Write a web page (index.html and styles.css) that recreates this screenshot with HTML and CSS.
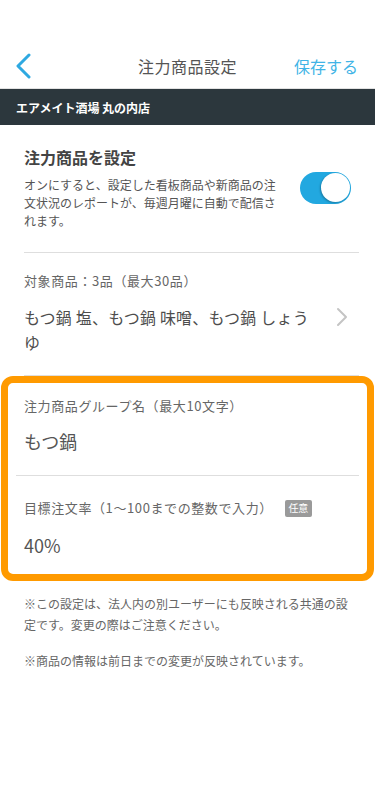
FILE: index.html
```html
<!DOCTYPE html>
<html lang="ja">
<head>
<meta charset="utf-8">
<link rel="stylesheet" href="styles.css">
</head>
<body>
<div class="status"></div>
<header class="nav">
  <span class="back">
    <svg width="18" height="26" viewBox="0 0 18 26"><path d="M15 2 L4 13 L15 24" fill="none" stroke="#2ea9e1" stroke-width="3" stroke-linecap="round" stroke-linejoin="round"/></svg>
  </span>
  <h1 class="title">注力商品設定</h1>
  <span class="save">保存する</span>
</header>
<div class="shop">エアメイト酒場 丸の内店</div>

<section class="block">
  <div class="block-inner toggle-row">
    <div class="toggle-text">
      <h2 class="heading">注力商品を設定</h2>
      <p class="desc">オンにすると、設定した看板商品や新商品の注文状況のレポートが、毎週月曜に自動で配信されます。</p>
    </div>
    <div class="switch"><span class="knob"></span></div>
  </div>
</section>

<section class="block">
  <div class="block-inner products">
    <div class="products-text">
      <div class="label">対象商品：3品（最大30品）</div>
      <div class="product-list">もつ鍋 塩、もつ鍋 味噌、もつ鍋 しょうゆ</div>
    </div>
    <svg class="chev" width="12" height="20" viewBox="0 0 12 20"><path d="M2 2 L10 10 L2 18" fill="none" stroke="#c4c4c4" stroke-width="2" stroke-linecap="round" stroke-linejoin="round"/></svg>
  </div>
</section>

<section class="highlight">
  <div class="field first">
    <div class="label">注力商品グループ名（最大10文字）</div>
    <div class="value">もつ鍋</div>
  </div>
  <div class="field last">
    <div class="label">目標注文率（1〜100までの整数で入力）<span class="badge">任意</span></div>
    <div class="value">40%</div>
  </div>
</section>

<footer class="notes">
  <p>※この設定は、法人内の別ユーザーにも反映される共通の設定です。変更の際はご注意ください。</p>
  <p>※商品の情報は前日までの変更が反映されています。</p>
</footer>
</body>
</html>
```

FILE: styles.css
```css
* { box-sizing: border-box; }
html, body { margin: 0; padding: 0; background: #fff; }
body {
  font-family: "Noto Sans CJK JP", "Noto Sans", sans-serif;
  color: #555;
  width: 375px;
}
.status { height: 44px; }
.nav {
  height: 45px;
  display: flex;
  align-items: center;
  justify-content: space-between;
  padding: 0 17px 0 14px;
  border-bottom: 1px solid #e2e2e2;
  position: relative;
}
.back { display: flex; width: 18px; height: 26px; }
.title {
  position: absolute;
  left: 0; right: 0;
  text-align: center;
  margin: 0;
  font-size: 16px;
  letter-spacing: 0.5px;
  font-weight: 400;
  color: #555;
  pointer-events: none;
}
.save { font-size: 16px; color: #41b4e6; }
.shop {
  height: 36px;
  background: #2c373d;
  color: #fff;
  font-size: 12px;
  font-weight: 700;
  display: flex;
  align-items: center;
  padding-left: 16px;
}
.block { padding: 0 16px 0 24px; }
.block-inner { border-bottom: 1px solid #dedede; }
.toggle-row {
  display: flex;
  align-items: center;
  justify-content: space-between;
  padding: 20px 0 22px;
}
.heading {
  margin: 0;
  font-size: 16px;
  line-height: 24px;
  font-weight: 700;
  color: #444;
}
.desc {
  margin: 7px 0 0;
  width: 262px;
  font-size: 12px;
  line-height: 18px;
  color: #555;
}
.switch {
  width: 51px;
  height: 32px;
  border-radius: 16px;
  background: #22a8e0;
  margin-right: 8px;
  display: flex;
  align-items: center;
  justify-content: flex-end;
  padding-right: 1.5px;
}
.knob {
  width: 29px;
  height: 29px;
  border-radius: 50%;
  background: #fff;
  box-shadow: -1px 1px 2px rgba(0,0,0,0.25);
}
.products {
  display: flex;
  align-items: center;
  justify-content: space-between;
  padding: 18px 0 20px;
}
.label {
  font-size: 13px;
  line-height: 20px;
  letter-spacing: 0.6px;
  color: #666;
  display: flex;
  align-items: center;
}
.product-list {
  margin-top: 14px;
  width: 292px;
  font-size: 16px;
  line-height: 25px;
  letter-spacing: 0.2px;
  color: #4d4d4d;
}
.chev { margin-right: 11px; margin-top: 7px; }
.highlight {
  margin: 0 1px;
  border: 7px solid #ff9a00;
  border-radius: 12px;
  padding: 0 8px;
}
.field { padding-left: 8px; }
.field.first { padding-top: 13px; padding-bottom: 21px; border-bottom: 1px solid #dedede; }
.field.last { padding-top: 22px; padding-bottom: 16px; }
.value {
  margin-top: 12px;
  font-size: 18px;
  line-height: 26px;
  color: #555;
}
.field.last .value { margin-top: 14px; }
.badge {
  display: inline-flex;
  align-items: center;
  justify-content: center;
  margin-left: 12px;
  width: 27px;
  height: 17px;
  border-radius: 2px;
  background: #9a9a9a;
  color: #fff;
  font-size: 10px;
  letter-spacing: 0;
  line-height: 1;
}
.notes { padding: 12px 24px 0; }
.notes p {
  margin: 0 0 15px;
  font-size: 12px;
  line-height: 21px;
  color: #666;
}
```
